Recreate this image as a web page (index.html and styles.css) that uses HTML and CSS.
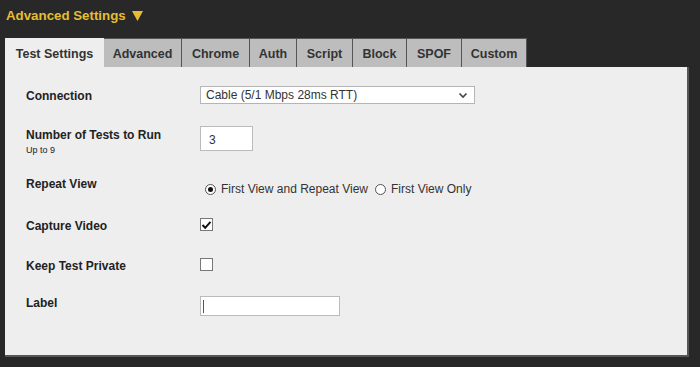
FILE: index.html
```html
<!DOCTYPE html>
<html>
<head>
<meta charset="utf-8">
<link rel="stylesheet" href="styles.css">
</head>
<body>
<div class="page">
  <div class="heading">Advanced Settings <svg class="arrow" width="11" height="10" viewBox="0 0 11 10"><path d="M0 0 H11 L5.5 10 Z" fill="#e6bd32"/></svg></div>
  <div class="tabs">
    <div class="tab active">Test Settings</div>
    <div class="tab">Advanced</div>
    <div class="tab">Chrome</div>
    <div class="tab">Auth</div>
    <div class="tab">Script</div>
    <div class="tab">Block</div>
    <div class="tab">SPOF</div>
    <div class="tab">Custom</div>
  </div>
  <div class="panel">
    <div class="row r-conn">
      <div class="label">Connection</div>
      <div class="select"><span>Cable (5/1 Mbps 28ms RTT)</span>
        <svg width="10" height="7" viewBox="0 0 10 7"><path d="M1.5 1.5 L5 5 L8.5 1.5" fill="none" stroke="#444" stroke-width="1.6"/></svg>
      </div>
    </div>
    <div class="row r-num">
      <div class="label">Number of Tests to Run<div class="sub">Up to 9</div></div>
      <div class="input num">3</div>
    </div>
    <div class="row r-rep">
      <div class="label">Repeat View</div>
      <div class="radios">
        <span class="radio on"></span><span class="rtext">First View and Repeat View</span>
        <span class="radio"></span><span class="rtext">First View Only</span>
      </div>
    </div>
    <div class="row r-cap">
      <div class="label">Capture Video</div>
      <div class="check on"><svg width="11" height="10" viewBox="0 0 11 10"><path d="M1.5 5 L4.2 7.8 L9.5 1.8" fill="none" stroke="#111" stroke-width="2"/></svg></div>
    </div>
    <div class="row r-priv">
      <div class="label">Keep Test Private</div>
      <div class="check"></div>
    </div>
    <div class="row r-label">
      <div class="label">Label</div>
      <div class="input text"><span class="caret"></span></div>
    </div>
  </div>
</div>
</body>
</html>
```
FILE: styles.css
```css
html, body { margin: 0; padding: 0; }
body {
  background: #282828;
  font-family: "Liberation Sans", Arial, sans-serif;
  width: 700px;
  height: 367px;
  overflow: hidden;
}
.page { padding: 0 11px 0 5px; }
.heading {
  color: #e6bd32;
  font-weight: bold;
  font-size: 13.3px;
  padding-top: 8px;
  height: 38px;
  box-sizing: border-box;
  padding-left: 1px;
}
.arrow { margin-left: 3px; vertical-align: -1px; }
.tabs { display: flex; height: 29px; }
.tab {
  background: #bdbdbd;
  color: #333;
  font-weight: bold;
  font-size: 12.5px;
  border: 1px solid #555;
  border-left: none;
  border-bottom: none;
  display: flex;
  align-items: center;
  justify-content: center;
  box-sizing: border-box;
  padding: 2px 0 0;
}
.tab:nth-child(1) { width: 99px; }
.tab:nth-child(2) { width: 78px; }
.tab:nth-child(3) { width: 68px; }
.tab:nth-child(4) { width: 47px; }
.tab:nth-child(5) { width: 56px; }
.tab:nth-child(6) { width: 54px; }
.tab:nth-child(7) { width: 55px; }
.tab:nth-child(8) { width: 65px; }
.tab.active { background: #eeeeee; border: none; }
.panel {
  background: #eeeeee;
  height: 290px;
  box-sizing: border-box;
  padding: 0 0 0 21px;
  border-right: 2px solid #555;
  border-bottom: 2px solid #555;
  position: relative;
}
.row { display: flex; align-items: flex-start; }
.label {
  width: 174px;
  font-weight: bold;
  font-size: 12px;
  color: #222;
}
.sub { font-weight: normal; font-size: 9px; margin-top: 3px; color: #222; }
.r-conn { padding-top: 20px; }
.r-conn .label { padding-top: 2px; }
.select {
  width: 275px;
  height: 18px;
  box-sizing: border-box;
  background: #fff;
  border: 1px solid #b5b5b5;
  font-size: 12px;
  color: #333;
  display: flex;
  align-items: center;
  justify-content: space-between;
  padding: 0 6px 0 5px;
  margin-top: -1px;
}
.r-num { padding-top: 22px; }
.r-num .label { padding-top: 2px; }
.input {
  background: #fff;
  border: 1px solid #bbb;
  box-sizing: border-box;
  font-size: 12px;
  color: #333;
}
.num { width: 53px; height: 25px; padding: 6px 0 0 8px; margin-top: 0; }
.r-rep { padding-top: 22px; }
.radios { display: flex; align-items: center; font-size: 12px; color: #333; margin-top: 5px; padding-left: 5px; }
.radio {
  width: 11px; height: 11px;
  border: 1px solid #555;
  border-radius: 50%;
  background: #fff;
  box-sizing: border-box;
  position: relative;
  margin-right: 5px;
}
.radio.on::after {
  content: "";
  position: absolute;
  left: 2px; top: 2px;
  width: 5px; height: 5px;
  background: #111;
  border-radius: 50%;
}
.rtext { margin-right: 7px; }
.r-cap { padding-top: 23px; }
.check {
  width: 13px; height: 13px;
  border: 1px solid #777;
  background: #fff;
  box-sizing: border-box;
  display: flex; align-items: center; justify-content: center;
  margin-top: -1px;
}
.r-priv { padding-top: 26px; }
.r-label { padding-top: 23px; }
.text { width: 140px; height: 20px; margin-top: 0; padding: 3px 0 0 2px; }
.caret { display: block; width: 1px; height: 13px; background: #555; }
```
